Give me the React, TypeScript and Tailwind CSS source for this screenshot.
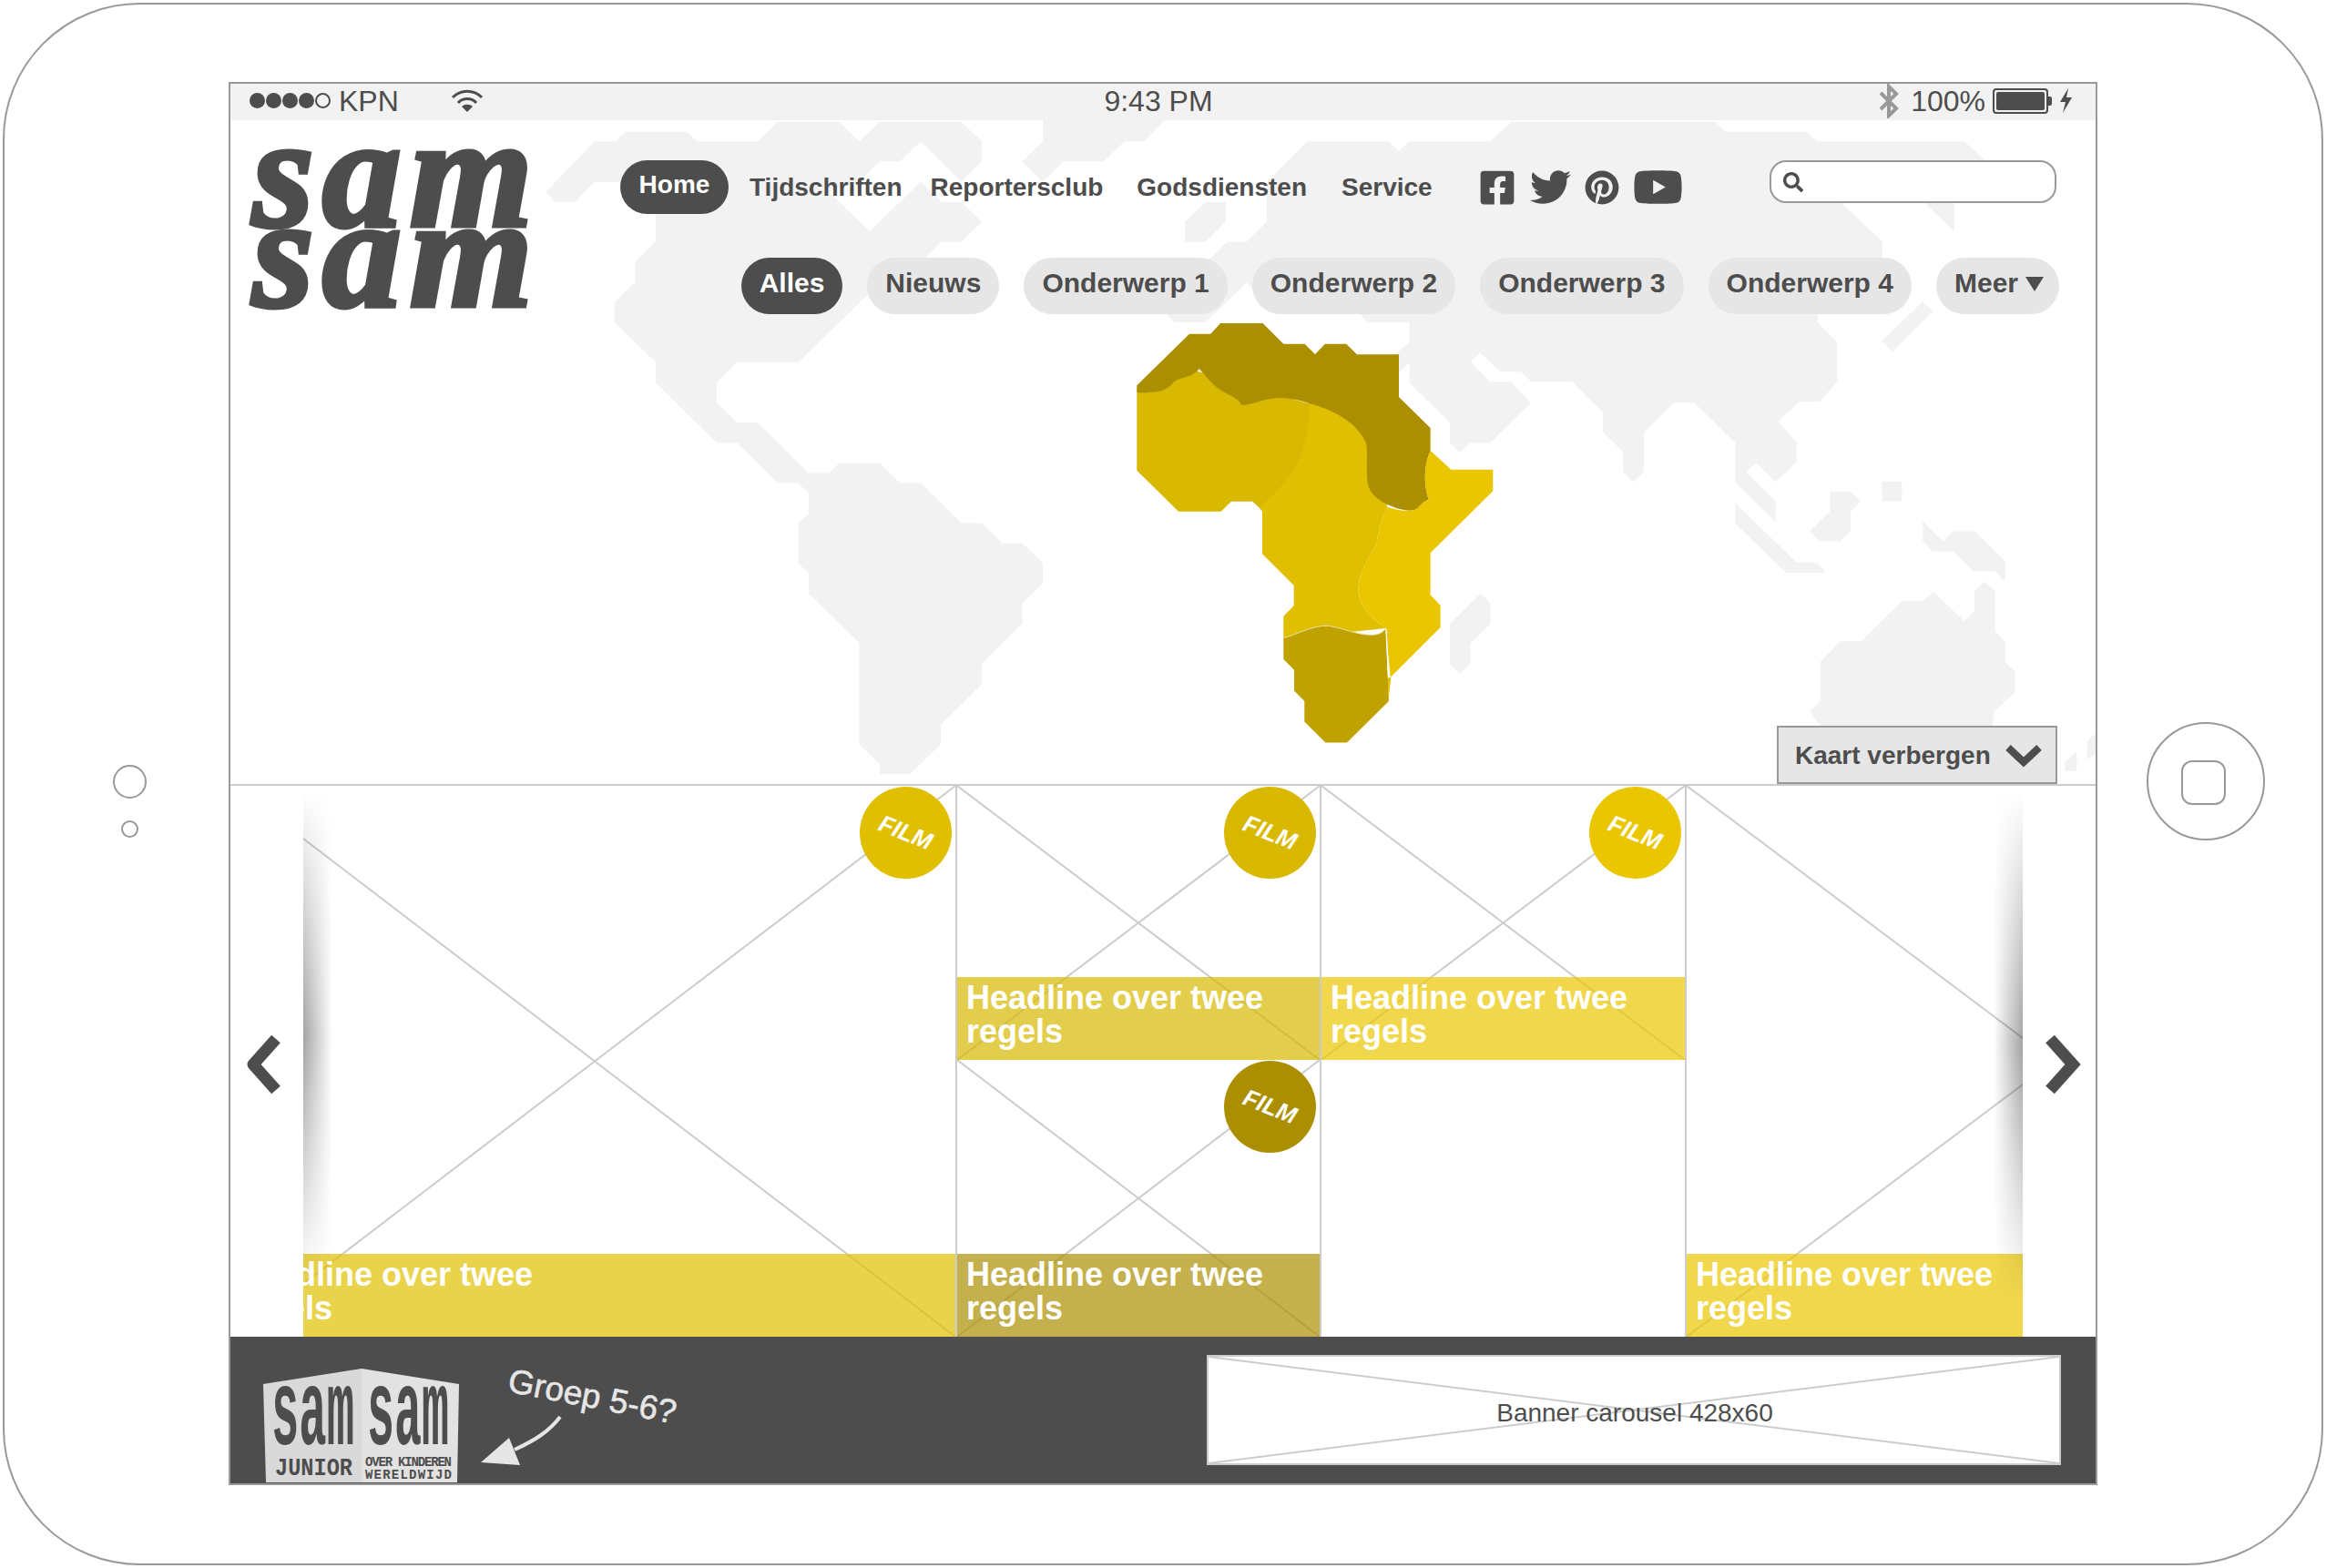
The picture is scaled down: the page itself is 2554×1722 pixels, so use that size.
import React from "react";
import { FaFacebookSquare, FaTwitter, FaPinterest, FaYoutube, FaSearch } from "react-icons/fa";

const topics = ["Nieuws", "Onderwerp 1", "Onderwerp 2", "Onderwerp 3", "Onderwerp 4"];

// map shapes, traced from the crops: x/y in crop pixels, scaled back in the <g>
const americas =
  "0,175 115,55 165,55 188,32 336,32 360,55 505,55 553,8 700,8 748,55 797,8 992,8 1041,55 1041,103 992,152 895,55 846,103 797,103 748,152 675,175 773,270 895,152 945,200 992,200 1041,247 992,295 945,295 910,330 770,420 603,583 456,583 407,632 407,680 456,728 505,728 627,848 675,848 700,824 797,824 846,872 895,872 992,968 1041,968 1090,1016 1138,1016 1187,1064 1187,1112 1138,1160 1138,1208 1041,1305 1041,1353 943,1450 943,1497 870,1568 797,1568 797,1545 748,1497 748,1255 627,1136 627,1088 602,1064 602,968 627,945 627,896 602,872 553,872 456,776 407,776 261,632 261,583 163,488 163,440 212,392 212,343 261,295 261,200 213,152 115,152 68,200 18,200";
const greenland = "1187,0 1187,55 1138,103 1187,152 1236,103 1333,103 1382,55 1430,55 1482,0";
const eurasia =
  "1513,55 1867,55 1915,100 1940,128 1842,128 1842,271 1770,200 1530,150 1575,205 1670,295 1670,400 1515,462 1515,488 1562,535 1562,630 1520,677 1472,677 1420,725 1465,773 1465,822 1415,870 1368,823 1345,846 1415,915 1415,965 1318,870 1318,775 1220,680 1172,680 1100,750 1100,845 1075,870 1050,845 1050,798 1002,750 1002,703 928,630 830,630 806,606 757,606 708,560 685,583 733,630 782,630 830,680 733,776 684,776 660,800 636,776 636,728 539,632 539,585 500,620 500,570 539,535 539,488 440,488 415,463 200,445 150,392 52,488 -22,488 -47,463 20,378 78,320 103,295 150,295 198,247 198,152 295,55 490,55 514,78 539,55 733,55 782,8 1270,8 1295,32 1490,32";
const uk = "2,247 52,200 100,200 100,247 52,295 2,295";
const sumatra = "1318,920 1465,1062 1513,1062 1536,1087 1440,1087 1318,968";
const madagascar = "636,1208 710,1136 733,1160 733,1208 685,1256 685,1305 660,1328 636,1305";
const eastIslands = [
  "1020,535 1118,440 1142,463 1045,560",
  "895,896 945,896 970,920 945,945 945,992 920,1016 870,1016 847,992 895,945",
  "1020,872 1068,872 1068,920 1020,920",
  "1118,968 1167,1016 1192,992 1243,992 1316,1064 1316,1112 1292,1088 1240,1088 1192,1040 1142,1040 1118,1016",
  "872,1305 920,1256 970,1256 1068,1160 1118,1160 1143,1136 1218,1208 1242,1184 1242,1136 1267,1112 1292,1136 1292,1232 1316,1256 1316,1305 1340,1330 1340,1378 1290,1425 1280,1500 900,1500 847,1425 872,1400",
  "1513,1540 1513,1495 1553,1460 1553,1510",
  "1460,1545 1488,1520 1488,1568 1460,1568",
];

function WorldMap() {
  return (
    <svg className="absolute left-0 top-0 h-full w-full" viewBox="253 132 2048 729">
      <g fill="#f2f2f2">
        <g transform="translate(600 130) scale(0.4592)">
          <polygon points={americas} />
          <polygon points={greenland} />
        </g>
        <g transform="translate(1300 130) scale(0.4592)">
          <polygon points={eurasia} />
          <polygon points={uk} />
          <polygon points={sumatra} />
          <polygon points={madagascar} />
        </g>
        <g transform="translate(1600 130) scale(0.4572)">
          {eastIslands.map((p) => (
            <polygon key={p} points={p} />
          ))}
        </g>
      </g>
      <g transform="translate(1200 340) scale(0.3333)">
        <path fill="#e0bf00" d="M550 655L558 665V805L662 908V976L628 1010V1085L965 1050C940 1030 870 990 875 910C878 860 915 810 935 770C940 730 955 680 970 650L900 300L712 300Z" />
        <path fill="#d8b800" d="M145 260V530L282 665H422L456 632H526L550 655C600 590 715 540 712 310L500 250L300 190Z" />
        <path fill="#ab8f00" d="M145 250L318 80H388L420 45H560L628 113H698L732 147L765 113H835L870 148H1008V288L1112 390V465C1095 500 1085 570 1107 627C1085 630 1085 650 1060 660C1020 670 950 640 920 605C890 570 910 490 900 440C870 370 790 330 715 310C670 295 625 285 580 295C550 300 520 315 490 315C480 290 440 280 420 265C390 245 370 215 350 195C330 225 290 220 265 240C240 275 190 275 145 273Z" />
        <path fill="#eac600" d="M1112 465L1180 527H1318V598L1112 802V940L1145 975V1047L980 1212L965 1050C940 1030 870 990 875 910C878 860 915 810 935 770C940 730 955 680 970 650C1000 660 1040 668 1065 658C1080 645 1085 630 1107 627C1085 570 1095 500 1112 465Z" />
        <path fill="#bfa100" d="M628 1082C670 1072 720 1040 775 1042C820 1048 870 1072 915 1072C940 1072 955 1065 965 1050L975 1290L837 1427H766L697 1358V1290L663 1256V1187L628 1152Z" />
        <path fill="none" stroke="#e8e0a0" strokeWidth="3" d="M628 1082C670 1072 720 1040 775 1042C820 1048 870 1072 915 1072C940 1072 955 1065 965 1050" />
        <path fill="#e0bf00" d="M982 1212L973 1290L972 1212Z" />
        <path fill="none" stroke="#ffffff" strokeWidth="4" d="M966 1052L974 1214" />
      </g>
    </svg>
  );
}

function Cross() {
  return (
    <svg className="absolute left-0 top-0 h-full w-full" viewBox="0 0 100 100" preserveAspectRatio="none">
      <line x1="0" y1="0" x2="100" y2="100" stroke="#cccccc" strokeWidth="2" vectorEffect="non-scaling-stroke" />
      <line x1="100" y1="0" x2="0" y2="100" stroke="#cccccc" strokeWidth="2" vectorEffect="non-scaling-stroke" />
    </svg>
  );
}

function Badge({ color }: { color: string }) {
  return (
    <div className={`absolute right-[4px] top-[1px] flex h-[101px] w-[101px] items-center justify-center rounded-full ${color}`}>
      <span className="rotate-[22deg] text-[26px] font-bold italic text-white">FILM</span>
    </div>
  );
}

function Headline({ color }: { color: string }) {
  return (
    <div className={`absolute bottom-0 left-0 right-0 h-[91px] pl-[10px] pt-[4px] text-[36px] font-bold leading-[37px] text-white ${color}`}>
      Headline over twee
      <br />
      regels
    </div>
  );
}

function Tile({ badge, head, height }: { badge: string; head: string; height: string }) {
  return (
    <div className={`relative overflow-hidden ${height}`}>
      <Cross />
      <Headline color={head} />
      <Badge color={badge} />
    </div>
  );
}

function Tiles() {
  return (
    <div className="flex h-[607px] border-t-2 border-[#cccccc]">
      <div className="flex w-[80px] shrink-0 items-center justify-center pr-[6px] pt-[6px]">
        <svg width="44" height="68" viewBox="0 0 44 68">
          <polyline points="35,6 10,34 35,62" fill="none" stroke="#4d4d4d" strokeWidth="13" strokeLinejoin="round" />
        </svg>
      </div>

      <div className="relative flex h-full min-w-0 flex-1 overflow-hidden">
        <div className="flex w-[716px] shrink-0 justify-end overflow-hidden">
          <div className="relative h-full w-[800px] shrink-0">
            <div className="absolute right-0 top-0 h-full w-[792px]">
              <Cross />
            </div>
            <Headline color="bg-[#e0bf00]/70" />
            <Badge color="bg-[#e0bf00]" />
          </div>
        </div>
        <div className="w-[402px] shrink-0 border-x-2 border-[#cccccc]">
          <Tile height="h-[301px]" badge="bg-[#d8b800]" head="bg-[#d8b800]/70" />
          <Tile height="h-[304px]" badge="bg-[#ab8f00]" head="bg-[#ab8f00]/70" />
        </div>
        <div className="w-[399px] shrink-0">
          <Tile height="h-[301px]" badge="bg-[#eac600]" head="bg-[#eac600]/70" />
        </div>
        <div className="relative h-full w-[371px] shrink-0 overflow-hidden border-l-2 border-[#cccccc]">
          <div className="absolute left-0 top-0 h-full w-[806px]">
            <Cross />
          </div>
          <Headline color="bg-[#eac600]/70" />
        </div>
        <div className="absolute bottom-[60px] left-0 top-[6px] w-[32px] bg-[linear-gradient(to_right,rgba(0,0,0,0.36),transparent)] [mask-image:linear-gradient(to_bottom,transparent,black_50%,transparent)]" />
        <div className="absolute bottom-[40px] right-0 top-[6px] w-[32px] bg-[linear-gradient(to_left,rgba(0,0,0,0.36),transparent)] [mask-image:linear-gradient(to_bottom,transparent,black_50%,transparent)]" />
      </div>

      <div className="flex w-[80px] shrink-0 items-center justify-center pl-[6px] pt-[6px]">
        <svg width="44" height="68" viewBox="0 0 44 68">
          <polyline points="9,6 34,34 9,62" fill="none" stroke="#4d4d4d" strokeWidth="13" />
        </svg>
      </div>
    </div>
  );
}

function JuniorLogo() {
  return (
    <svg width="215" height="126" viewBox="0 0 215 126" className="shrink-0">
      <polygon points="0,17 108,0 108,125 3,125" fill="#d9d9d9" />
      <polygon points="108,0 215,17 213,125 108,125" fill="#e2e2e2" />
      <g fill="#4d4d4d" fontFamily="'Liberation Mono', monospace" fontWeight="700">
        <text x="9" y="83" fontSize="118" textLength="91" lengthAdjust="spacingAndGlyphs">sam</text>
        <text x="114" y="83" fontSize="118" textLength="90" lengthAdjust="spacingAndGlyphs">sam</text>
        <text x="13" y="117" fontSize="28" textLength="85" lengthAdjust="spacingAndGlyphs">JUNIOR</text>
        <text x="112" y="107" fontSize="14" textLength="95" lengthAdjust="spacing">OVER KINDEREN</text>
        <text x="112" y="121" fontSize="14" textLength="95" lengthAdjust="spacing">WERELDWIJD</text>
      </g>
    </svg>
  );
}

export default function App() {
  return (
    <div className="h-[1722px] w-[2554px] bg-white p-[3px] font-['Liberation_Sans',sans-serif] text-[#4d4d4d]">
      <div className="flex h-[1716px] rounded-[150px] border-2 border-[#999999]">
        {/* camera + mic */}
        <div className="flex w-[246px] shrink-0 flex-col items-center gap-[24px] pl-[29px] pt-[835px]">
          <div className="h-[37px] w-[37px] rounded-full border-2 border-[#999999]" />
          <div className="h-[19px] w-[19px] rounded-full border-2 border-[#999999]" />
        </div>

        <div className="mt-[85px] flex h-[1541px] w-[2052px] shrink-0 flex-col border-2 border-[#999999]">
          {/* status bar */}
          <div className="grid h-[40px] shrink-0 grid-cols-[1fr_auto_1fr] grid-rows-[37px] items-center bg-[#f2f2f2] pl-[21px] pr-[25px] text-[32px]">
            <div className="flex items-center">
              <div className="flex items-center gap-[1px]">
                <span className="h-[17px] w-[17px] rounded-full bg-[#4d4d4d]" />
                <span className="h-[17px] w-[17px] rounded-full bg-[#4d4d4d]" />
                <span className="h-[17px] w-[17px] rounded-full bg-[#4d4d4d]" />
                <span className="h-[17px] w-[17px] rounded-full bg-[#4d4d4d]" />
                <span className="h-[17px] w-[17px] rounded-full border-2 border-[#4d4d4d]" />
              </div>
              <span className="ml-[9px]">KPN</span>
              <svg className="ml-[57px]" width="36" height="26" viewBox="0 0 36 26" fill="none" stroke="#4d4d4d" strokeWidth="3">
                <path d="M2 9C11 0 25 0 34 9" />
                <path d="M8 15C13 9 23 9 28 15" />
                <path d="M18 25L12 19C15 16 21 16 24 19Z" fill="#4d4d4d" stroke="none" />
              </svg>
            </div>
            <span className="-translate-x-[3px]">9:43 PM</span>
            <div className="flex items-center justify-end">
              <svg width="24" height="38" viewBox="0 0 24 38" fill="none" stroke="#999999" strokeWidth="4">
                <path d="M3 10L20 27L12 35V3L20 11L3 28" />
              </svg>
              <span className="ml-[12px]">100%</span>
              <div className="ml-[8px] flex items-center">
                <div className="h-[28px] w-[61px] rounded-[4px] border-2 border-[#4d4d4d] p-[2px]">
                  <div className="h-full w-full rounded-[2px] bg-[#4d4d4d]" />
                </div>
                <div className="h-[10px] w-[4px] rounded-r-[2px] bg-[#4d4d4d]" />
              </div>
              <svg className="ml-[8px]" width="15" height="27" viewBox="0 0 15 27">
                <polygon points="10,0 1,15 7,15 4,27 14,10 8,10" fill="#4d4d4d" />
              </svg>
            </div>
          </div>

          {/* header over the map */}
          <div className="relative flex h-[729px] shrink-0 overflow-hidden">
            <WorldMap />
            <div className="relative w-[428px] shrink-0 pl-[24px] pt-[2px]">
              <div className="font-['Liberation_Serif',serif] text-[174px] font-bold italic leading-[87px] tracking-[9px] [-webkit-text-stroke:5px_#4d4d4d]">
                <div className="h-[88px] pt-[12px]">sam</div>
                <div className="h-[88px] pt-[12px]">sam</div>
              </div>
            </div>
            <div className="relative min-w-0 flex-1 pr-[40px] pt-[44px] font-bold">
              <div className="flex h-[59px] items-center text-[28px]">
                <a className="flex h-[59px] w-[119px] items-center justify-center rounded-full bg-[#4d4d4d] pb-[6px] text-white">Home</a>
                <a className="ml-[23px]">Tijdschriften</a>
                <a className="ml-[31px]">Reportersclub</a>
                <a className="ml-[37px]">Godsdiensten</a>
                <a className="ml-[38px]">Service</a>
                <div className="ml-[50px] flex items-center gap-[15px]">
                  <FaFacebookSquare size={42} />
                  <FaTwitter size={45} />
                  <FaPinterest size={38} />
                  <FaYoutube size={55} />
                </div>
                <div className="mb-[12px] ml-[95px] flex h-[47px] w-[315px] items-center rounded-[18px] border-2 border-[#999999] bg-white pl-[13px]">
                  <FaSearch size={22} />
                </div>
              </div>
              <div className="mt-[48px] flex justify-end gap-[27px] text-[30px]">
                <a className="flex h-[62px] items-center rounded-full bg-[#4d4d4d] px-[20px] pb-[8px] text-white">Alles</a>
                {topics.map((t) => (
                  <a key={t} className="flex h-[62px] items-center rounded-full bg-[#e6e6e6] px-[20px] pb-[8px]">
                    {t}
                  </a>
                ))}
                <a className="flex h-[62px] items-center gap-[8px] rounded-full bg-[#e6e6e6] pb-[8px] pl-[20px] pr-[17px]">
                  Meer
                  <svg width="20" height="16" viewBox="0 0 20 16" className="mt-[4px]">
                    <polygon points="0,0 20,0 10,16" fill="#4d4d4d" />
                  </svg>
                </a>
              </div>
            </div>
            <button className="absolute bottom-0 right-[42px] flex h-[64px] w-[308px] items-center border-2 border-[#999999] bg-[#e6e6e6] pl-[18px] pt-[1px] text-[28px] font-bold">
              Kaart verbergen
              <svg className="ml-[15px]" width="42" height="26" viewBox="0 0 42 26">
                <polyline points="4,4 21,20 38,4" fill="none" stroke="#4d4d4d" strokeWidth="8" />
              </svg>
            </button>
          </div>

          <Tiles />

          {/* footer */}
          <div className="flex min-h-0 flex-1 items-end bg-[#4d4d4d] pl-[36px]">
            <JuniorLogo />
            <div className="ml-[21px] flex h-full w-[240px] flex-col pt-[45px] text-[#e6e6e6]">
              <span className="ml-[32px] rotate-[11deg] self-start text-[37px] leading-[41px] [-webkit-text-stroke:0.6px_#e6e6e6]">Groep 5-6?</span>
              <svg className="-mt-[2px]" width="100" height="60" viewBox="0 0 100 60">
                <path d="M90 4C78 20 62 30 40 40" fill="none" stroke="#e6e6e6" strokeWidth="4" />
                <polygon points="3,54 34,27 46,57" fill="#e6e6e6" />
              </svg>
            </div>
            <div className="relative mb-[20px] ml-auto mr-[38px] flex h-[121px] w-[938px] items-center justify-center border-2 border-[#cccccc] bg-white pl-[2px] pt-[6px] text-[28px]">
              <Cross />
              <span className="relative">Banner carousel 428x60</span>
            </div>
          </div>
        </div>

        {/* home button */}
        <div className="flex flex-1 flex-col items-center pr-[8px] pt-[788px]">
          <div className="flex h-[130px] w-[130px] items-center justify-center rounded-full border-2 border-[#999999]">
            <div className="-ml-[6px] mt-[2px] h-[49px] w-[49px] rounded-[12px] border-2 border-[#999999]" />
          </div>
        </div>
      </div>
    </div>
  );
}
